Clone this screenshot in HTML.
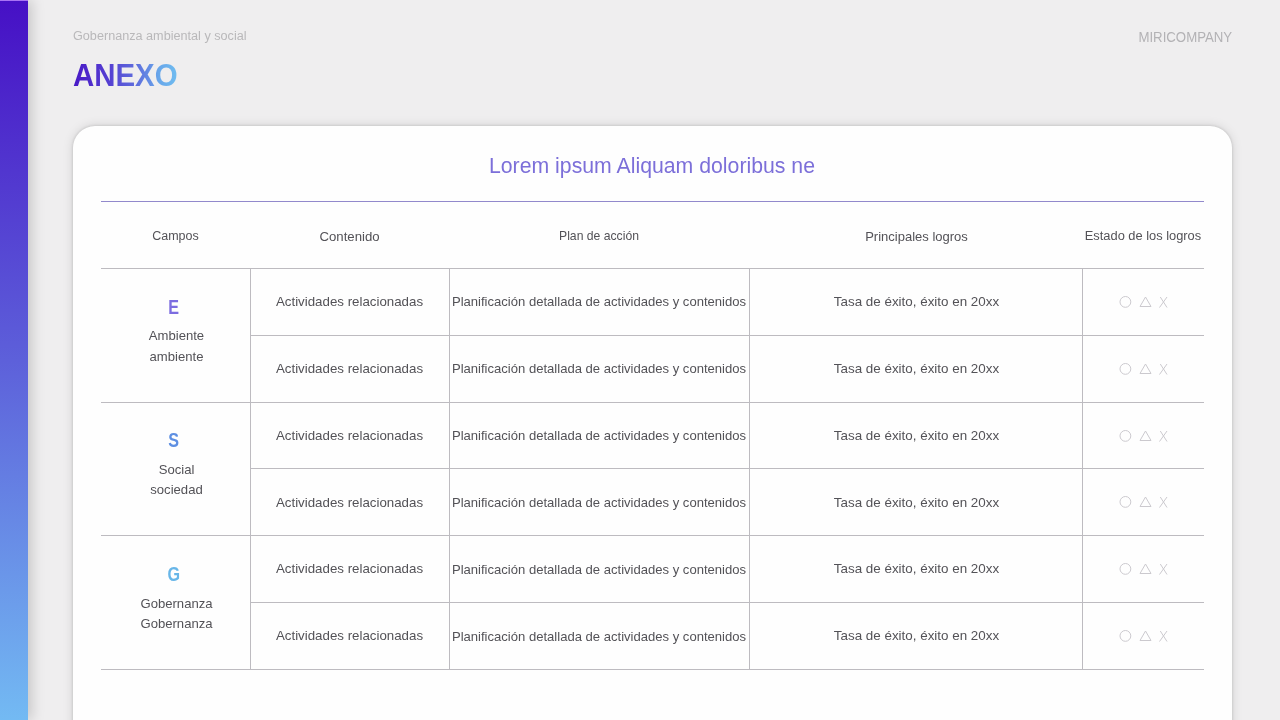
<!DOCTYPE html>
<html><head><meta charset="utf-8"><style>
html,body{margin:0;padding:0;}
body{width:1280px;height:720px;overflow:hidden;position:relative;background:#efeeef;font-family:"Liberation Sans",sans-serif;-webkit-font-smoothing:antialiased;}
.sb{position:absolute;left:0;top:0;width:28px;height:720px;background:linear-gradient(#4610c5,#5d60da 50%,#73baf3);box-shadow:4px 0 13px rgba(0,0,0,0.17);}
.card{position:absolute;left:73px;top:126px;width:1159px;height:640px;background:#fefefe;border-radius:22px;box-shadow:0 0 3px rgba(0,0,0,0.16),0 0 11px rgba(0,0,0,0.13);}
.t{position:absolute;white-space:nowrap;line-height:1;text-align:center;color:#535257;will-change:transform;}
.lt{font-weight:bold;}
.pl{position:absolute;height:1px;background:#9289cc;}
.hl{position:absolute;height:1px;background:#bdbbc0;}
.vl{position:absolute;width:1px;background:#bdbbc0;}
.sym{position:absolute;}
.sub{position:absolute;left:72.5px;top:29.59px;font-size:12.65px;line-height:1;color:#b9b8ba;white-space:nowrap;will-change:transform;}
.anexo{position:absolute;left:72.6px;top:60.00px;font-size:31.3px;line-height:1;font-weight:bold;white-space:nowrap;transform:scaleX(0.94);transform-origin:left center;background:linear-gradient(90deg,#4818c6,#5540d2 35%,#5f70de 62%,#68a6ea 82%,#6fbcf0);-webkit-background-clip:text;background-clip:text;color:transparent;}
.mc{position:absolute;right:48px;top:29.56px;font-size:14.7px;line-height:1;color:#b3b2b5;white-space:nowrap;transform:scaleX(0.9);transform-origin:right center;}
.title{position:absolute;left:352px;width:600px;text-align:center;top:156.01px;font-size:21.25px;line-height:1;color:#7c6fd9;white-space:nowrap;will-change:transform;}
</style></head><body>
<div class="sb"></div><div style="position:absolute;left:0;top:0;width:28px;height:1px;background:#a874f4"></div>
<div class="sub">Gobernanza ambiental y social</div>
<div class="anexo">ANEXO</div>
<div class="mc">MIRICOMPANY</div>
<div class="card"></div>
<div class="title">Lorem ipsum Aliquam doloribus ne</div>
<div class="t" style="left:71px;width:209px;top:230.12px;font-size:12.5px">Campos</div>
<div class="t" style="left:220px;width:259px;top:229.53px;font-size:13.2px">Contenido</div>
<div class="t" style="left:419px;width:360px;top:230.37px;font-size:12.2px">Plan de acción</div>
<div class="t" style="left:720px;width:393px;top:229.70px;font-size:13.0px">Principales logros</div>
<div class="t" style="left:1052px;width:182px;top:229.82px;font-size:12.85px">Estado de los logros</div>
<div class="pl" style="left:101px;top:201px;width:1103px"></div>
<div class="hl" style="left:101px;top:268px;width:1103px"></div>
<div class="hl" style="left:101px;top:402px;width:1103px"></div>
<div class="hl" style="left:101px;top:535px;width:1103px"></div>
<div class="hl" style="left:101px;top:669px;width:1103px"></div>
<div class="hl" style="left:250px;top:335px;width:954px"></div>
<div class="hl" style="left:250px;top:468px;width:954px"></div>
<div class="hl" style="left:250px;top:602px;width:954px"></div>
<div class="vl" style="left:250px;top:268px;height:402px"></div>
<div class="vl" style="left:449px;top:268px;height:402px"></div>
<div class="vl" style="left:749px;top:268px;height:402px"></div>
<div class="vl" style="left:1082px;top:268px;height:402px"></div>
<div class="t" style="left:220px;width:259px;top:295.16px;font-size:13.3px">Actividades relacionadas</div>
<div class="t" style="left:419px;width:360px;top:295.35px;font-size:13.07px">Planificación detallada de actividades y contenidos</div>
<div class="t" style="left:720px;width:393px;top:295.07px;font-size:13.4px">Tasa de éxito, éxito en 20xx</div>
<svg class="sym" style="left:1110px;top:289.91px" width="64" height="24" viewBox="1110 290 64 24"><g fill="none" stroke="#cbc9ce" stroke-width="1"><circle cx="1125.4" cy="301.9" r="5.4"/><path d="M1145.5 297 L1151 306.5 L1140 306.5 Z"/><path d="M1160.3 297 L1167 307.5 M1167 297 L1159.5 307.5"/></g></svg>
<div class="t" style="left:220px;width:259px;top:361.99px;font-size:13.3px">Actividades relacionadas</div>
<div class="t" style="left:419px;width:360px;top:362.19px;font-size:13.07px">Planificación detallada de actividades y contenidos</div>
<div class="t" style="left:720px;width:393px;top:361.91px;font-size:13.4px">Tasa de éxito, éxito en 20xx</div>
<svg class="sym" style="left:1110px;top:356.75px" width="64" height="24" viewBox="1110 290 64 24"><g fill="none" stroke="#cbc9ce" stroke-width="1"><circle cx="1125.4" cy="301.9" r="5.4"/><path d="M1145.5 297 L1151 306.5 L1140 306.5 Z"/><path d="M1160.3 297 L1167 307.5 M1167 297 L1159.5 307.5"/></g></svg>
<div class="t" style="left:220px;width:259px;top:428.83px;font-size:13.3px">Actividades relacionadas</div>
<div class="t" style="left:419px;width:360px;top:429.02px;font-size:13.07px">Planificación detallada de actividades y contenidos</div>
<div class="t" style="left:720px;width:393px;top:428.74px;font-size:13.4px">Tasa de éxito, éxito en 20xx</div>
<svg class="sym" style="left:1110px;top:423.59px" width="64" height="24" viewBox="1110 290 64 24"><g fill="none" stroke="#cbc9ce" stroke-width="1"><circle cx="1125.4" cy="301.9" r="5.4"/><path d="M1145.5 297 L1151 306.5 L1140 306.5 Z"/><path d="M1160.3 297 L1167 307.5 M1167 297 L1159.5 307.5"/></g></svg>
<div class="t" style="left:220px;width:259px;top:495.66px;font-size:13.3px">Actividades relacionadas</div>
<div class="t" style="left:419px;width:360px;top:495.85px;font-size:13.07px">Planificación detallada de actividades y contenidos</div>
<div class="t" style="left:720px;width:393px;top:495.57px;font-size:13.4px">Tasa de éxito, éxito en 20xx</div>
<svg class="sym" style="left:1110px;top:490.42px" width="64" height="24" viewBox="1110 290 64 24"><g fill="none" stroke="#cbc9ce" stroke-width="1"><circle cx="1125.4" cy="301.9" r="5.4"/><path d="M1145.5 297 L1151 306.5 L1140 306.5 Z"/><path d="M1160.3 297 L1167 307.5 M1167 297 L1159.5 307.5"/></g></svg>
<div class="t" style="left:220px;width:259px;top:562.49px;font-size:13.3px">Actividades relacionadas</div>
<div class="t" style="left:419px;width:360px;top:562.69px;font-size:13.07px">Planificación detallada de actividades y contenidos</div>
<div class="t" style="left:720px;width:393px;top:562.41px;font-size:13.4px">Tasa de éxito, éxito en 20xx</div>
<svg class="sym" style="left:1110px;top:557.25px" width="64" height="24" viewBox="1110 290 64 24"><g fill="none" stroke="#cbc9ce" stroke-width="1"><circle cx="1125.4" cy="301.9" r="5.4"/><path d="M1145.5 297 L1151 306.5 L1140 306.5 Z"/><path d="M1160.3 297 L1167 307.5 M1167 297 L1159.5 307.5"/></g></svg>
<div class="t" style="left:220px;width:259px;top:629.33px;font-size:13.3px">Actividades relacionadas</div>
<div class="t" style="left:419px;width:360px;top:629.52px;font-size:13.07px">Planificación detallada de actividades y contenidos</div>
<div class="t" style="left:720px;width:393px;top:629.24px;font-size:13.4px">Tasa de éxito, éxito en 20xx</div>
<svg class="sym" style="left:1110px;top:624.09px" width="64" height="24" viewBox="1110 290 64 24"><g fill="none" stroke="#cbc9ce" stroke-width="1"><circle cx="1125.4" cy="301.9" r="5.4"/><path d="M1145.5 297 L1151 306.5 L1140 306.5 Z"/><path d="M1160.3 297 L1167 307.5 M1167 297 L1159.5 307.5"/></g></svg>
<div class="t lt" style="left:99px;width:149px;top:296.50px;font-size:20.2px;color:#7c6ce0"><span style="display:inline-block;transform:scaleX(0.8)">E</span></div>
<div class="t" style="left:102px;width:149px;top:329.41px;font-size:13.1px">Ambiente</div>
<div class="t" style="left:102px;width:149px;top:349.61px;font-size:13.1px">ambiente</div>
<div class="t lt" style="left:99px;width:149px;top:430.17px;font-size:20.2px;color:#5e8fe2"><span style="display:inline-block;transform:scaleX(0.8)">S</span></div>
<div class="t" style="left:102px;width:149px;top:463.08px;font-size:13.1px">Social</div>
<div class="t" style="left:102px;width:149px;top:483.28px;font-size:13.1px">sociedad</div>
<div class="t lt" style="left:99px;width:149px;top:563.83px;font-size:20.2px;color:#68b6e8"><span style="display:inline-block;transform:scaleX(0.8)">G</span></div>
<div class="t" style="left:102px;width:149px;top:596.74px;font-size:13.1px">Gobernanza</div>
<div class="t" style="left:102px;width:149px;top:616.94px;font-size:13.1px">Gobernanza</div>
</body></html>
